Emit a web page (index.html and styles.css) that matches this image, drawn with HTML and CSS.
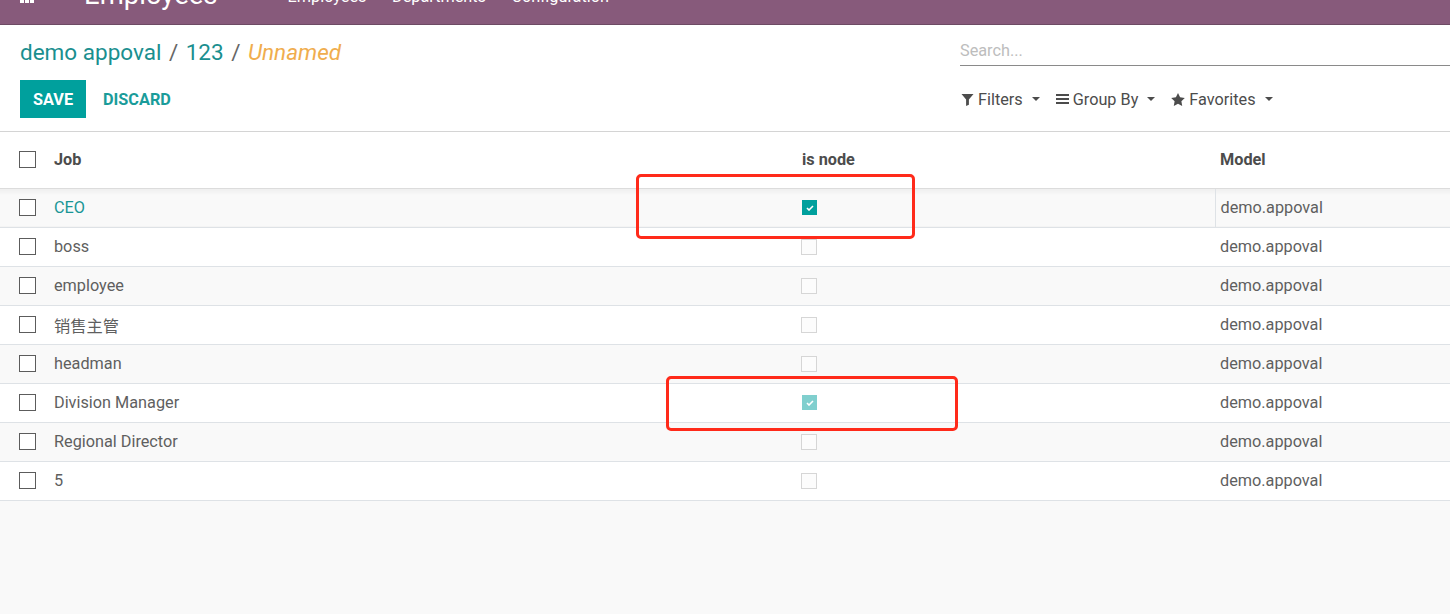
FILE: index.html
```html
<!DOCTYPE html>
<html lang="en">
<head>
<meta charset="utf-8">
<title>demo appoval - Employees</title>
<link rel="stylesheet" href="styles.css">
</head>
<body>
<header class="navbar">
  <span class="apps-icon">
    <svg width="14" height="14" viewBox="0 0 14 14"><g fill="#fff"><rect x="0" y="0" width="4" height="4"/><rect x="5" y="0" width="4" height="4"/><rect x="10" y="0" width="4" height="4"/><rect x="0" y="5" width="4" height="4"/><rect x="5" y="5" width="4" height="4"/><rect x="10" y="5" width="4" height="4"/><rect x="0" y="10" width="4" height="4"/><rect x="5" y="10" width="4" height="4"/><rect x="10" y="10" width="4" height="4"/></g></svg>
  </span>
  <span class="brand">Employees</span>
  <nav class="menu">
    <span class="menu-item">Employees</span>
    <span class="menu-item">Departments</span>
    <span class="menu-item">Configuration</span>
  </nav>
</header>

<section class="cp">
  <div class="breadcrumb">
    <span class="crumb">demo appoval</span><span class="sep">/</span><span class="crumb">123</span><span class="sep">/</span><span class="crumb-new">Unnamed</span>
  </div>
  <div class="search">
    <span class="placeholder">Search...</span>
  </div>
  <div class="buttons">
    <button class="btn-save">SAVE</button>
    <button class="btn-discard">DISCARD</button>
  </div>
  <div class="filters">
    <span class="fbtn">
      <svg class="ico" width="13" height="13" viewBox="0 0 13 13"><path d="M0.5 1h12l-4.6 5.4v5.3l-2.8 1.3v-6.6z" fill="#4c4c4c"/></svg>
      Filters
      <svg class="caret" width="8" height="4" viewBox="0 0 8 4"><path d="M0 0h8l-4 4z" fill="#4c4c4c"/></svg>
    </span>
    <span class="fbtn">
      <svg class="ico" width="13" height="12" viewBox="0 0 13 12"><g fill="#4c4c4c"><rect x="0" y="1" width="13" height="2"/><rect x="0" y="5" width="13" height="2"/><rect x="0" y="9" width="13" height="2"/></g></svg>
      Group By
      <svg class="caret" width="8" height="4" viewBox="0 0 8 4"><path d="M0 0h8l-4 4z" fill="#4c4c4c"/></svg>
    </span>
    <span class="fbtn">
      <svg class="ico" width="14" height="13" viewBox="0 0 14 13"><path d="M7 0l2.1 4.3 4.7.7-3.4 3.3.8 4.7L7 10.8 2.8 13l.8-4.7L.2 5l4.7-.7z" fill="#4c4c4c"/></svg>
      Favorites
      <svg class="caret" width="8" height="4" viewBox="0 0 8 4"><path d="M0 0h8l-4 4z" fill="#4c4c4c"/></svg>
    </span>
  </div>
</section>

<table class="list">
  <colgroup>
    <col class="c-sel"><col class="c-job"><col class="c-node"><col class="c-model">
  </colgroup>
  <thead>
    <tr>
      <th class="sel"><span class="cb"></span></th>
      <th>Job</th>
      <th>is node</th>
      <th>Model</th>
    </tr>
  </thead>
  <tbody>
    <tr class="selected">
      <td class="sel"><span class="cb"></span></td>
      <td class="link">CEO</td>
      <td><span class="bool checked"><svg width="8" height="6" viewBox="0 0 8 6"><path d="M1 3l2 2 4-4" stroke="#fff" stroke-width="1.6" fill="none"/></svg></span></td>
      <td class="model-edit">demo.appoval</td>
    </tr>
    <tr>
      <td class="sel"><span class="cb"></span></td>
      <td>boss</td>
      <td><span class="bool"></span></td>
      <td>demo.appoval</td>
    </tr>
    <tr>
      <td class="sel"><span class="cb"></span></td>
      <td>employee</td>
      <td><span class="bool"></span></td>
      <td>demo.appoval</td>
    </tr>
    <tr>
      <td class="sel"><span class="cb"></span></td>
      <td>销售主管</td>
      <td><span class="bool"></span></td>
      <td>demo.appoval</td>
    </tr>
    <tr>
      <td class="sel"><span class="cb"></span></td>
      <td>headman</td>
      <td><span class="bool"></span></td>
      <td>demo.appoval</td>
    </tr>
    <tr>
      <td class="sel"><span class="cb"></span></td>
      <td>Division Manager</td>
      <td><span class="bool checked faded"><svg width="8" height="6" viewBox="0 0 8 6"><path d="M1 3l2 2 4-4" stroke="#fff" stroke-width="1.6" fill="none"/></svg></span></td>
      <td>demo.appoval</td>
    </tr>
    <tr>
      <td class="sel"><span class="cb"></span></td>
      <td>Regional Director</td>
      <td><span class="bool"></span></td>
      <td>demo.appoval</td>
    </tr>
    <tr>
      <td class="sel"><span class="cb"></span></td>
      <td>5</td>
      <td><span class="bool"></span></td>
      <td>demo.appoval</td>
    </tr>
  </tbody>
</table>

<div class="mark mark-1"></div>
<div class="mark mark-2"></div>
</body>
</html>
```

FILE: styles.css
```css
* { box-sizing: border-box; }

html, body {
  margin: 0;
  padding: 0;
  height: 100%;
}

body {
  background: #f9f9f9;
  font-family: Roboto, "Noto Sans CJK SC", sans-serif;
  font-size: 16.25px;
  color: #4c4c4c;
  position: relative;
  overflow: hidden;
}

/* ---------- top navbar (scrolled, only bottom part visible) ---------- */
.navbar {
  height: 25px;
  background: #875a7b;
  border-bottom: 1px solid #6d4a64;
  display: flex;
  align-items: flex-start;
  overflow: hidden;
  color: #fff;
}

.apps-icon {
  margin-left: 20px;
  margin-top: -11px;
  display: block;
  line-height: 0;
}

.brand {
  margin-left: 50px;
  margin-top: -19px;
  font-size: 27.5px;
  line-height: 28px;
}

.menu {
  display: flex;
  gap: 25.5px;
  margin-left: 70px;
  margin-top: -13px;
}

.menu-item {
  font-size: 16.25px;
  line-height: 20px;
}

/* ---------- control panel ---------- */
.cp {
  background: #fff;
  border-bottom: 1px solid #d4d4d4;
  padding: 7px 0 13px 20px;
  display: grid;
  grid-template-columns: 940px 1fr;
  grid-template-rows: 34px 38px;
  row-gap: 14px;
}

.breadcrumb {
  font-size: 22.5px;
  line-height: 27px;
  padding-top: 7px;
  white-space: nowrap;
}

.crumb { color: #1a8f8f; }
.crumb-new { color: #f0ad4e; font-style: italic; }
.sep { color: #666; margin: 0 7.5px; }

.search {
  border-bottom: 1px solid #8a8a8a;
  display: flex;
  align-items: center;
  padding-top: 3px;
}

.placeholder {
  color: #bdbdbd;
  font-size: 16.25px;
}

.buttons {
  display: flex;
  align-items: stretch;
  gap: 0;
}

.btn-save,
.btn-discard {
  font-family: Roboto, sans-serif;
  font-size: 16.25px;
  font-weight: 700;
  border: none;
  padding: 0 13px;
  margin: 0;
  cursor: pointer;
}

.btn-save {
  background: #00a09d;
  color: #fff;
}

.btn-discard {
  background: transparent;
  color: #1a9c9a;
  margin-left: 4px;
}

.filters {
  display: flex;
  align-items: center;
  gap: 16px;
  padding-left: 1px;
  color: #4c4c4c;
}

.fbtn {
  display: flex;
  align-items: center;
  white-space: nowrap;
}

.ico { margin-right: 4px; }
.caret { margin-left: 9px; }

/* ---------- list ---------- */
.list {
  width: 100%;
  border-collapse: collapse;
  table-layout: fixed;
  background: #fff;
}

.c-sel { width: 49px; }
.c-job { width: 748px; }
.c-node { width: 418px; }

.list th,
.list td {
  text-align: left;
  padding: 0 5px;
  white-space: nowrap;
  overflow: hidden;
}

.list th {
  height: 56px;
  font-weight: 700;
  color: #4c4c4c;
  border-bottom: 1px solid #dcdcdc;
}

.list td {
  height: 39px;
  border-bottom: 1px solid #dee2e6;
  color: #5f5f5f;
}

.list tbody tr:nth-child(odd) td {
  background-color: #f9f9f9;
}

.list tbody tr:first-child td {
  background-image: linear-gradient(rgba(0, 0, 0, 0.045), rgba(0, 0, 0, 0) 7px);
}

.list .sel {
  padding-left: 19px;
  padding-right: 0;
}

.cb {
  display: block;
  width: 17px;
  height: 17px;
  border: 1px solid #5c5c5c;
  background: #fff;
}

.link { color: #1a9696 !important; }

.model-edit {
  border-left: 1px solid #dee2e6;
}

.bool {
  display: flex;
  align-items: center;
  justify-content: center;
  width: 16px;
  height: 16px;
  margin-left: -1px;
  border: 1px solid #d6d6d6;
  background: #fcfcfc;
}

.bool.checked {
  width: 15px;
  height: 15px;
  margin-left: 0;
  border: none;
  background: #00a09d;
}

.bool.faded {
  background: #80cfce;
}

/* ---------- red annotation boxes ---------- */
.mark {
  position: absolute;
  border: 3px solid #ff2a1a;
  border-radius: 5px;
  pointer-events: none;
}

.mark-1 { left: 636px; top: 174px; width: 279px; height: 65px; }
.mark-2 { left: 666px; top: 376px; width: 292px; height: 55px; }
```
